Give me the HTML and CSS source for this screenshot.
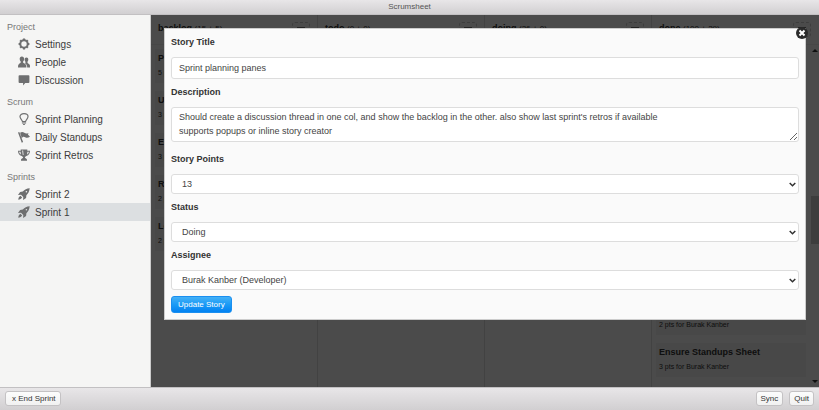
FILE: index.html
```html
<!DOCTYPE html>
<html lang="en">
<head>
    <meta charset="UTF-8">
    <meta name="viewport" content="width=device-width, initial-scale=1.0">
    <title>Scrumsheet</title>
    <link rel="stylesheet" href="styles.css">
</head>
<body>
    <svg class="sprite" aria-hidden="true">
        <symbol id="icon-cog" viewBox="0 0 20 20">
            <circle cx="10" cy="10" r="6.200" fill="none" stroke="currentColor" stroke-width="3.400"/>
            <path fill="none" stroke="currentColor" stroke-width="3.600" d="M10 1v2.500M10 16.500V19M1 10h2.500M16.500 10H19M3.600 3.600l1.800 1.800M14.600 14.600l1.800 1.800M3.600 16.400l1.800-1.800M14.600 5.400l1.800-1.800"/>
        </symbol>
        <symbol id="icon-users" viewBox="0 0 20 20">
            <path d="M6.500 1c2.500 0 3.700 1.600 3.700 4 0 1.700-.7 3.200-1.700 4.100v1.700c0 1 5 2.200 5.300 4.900l.2 3.300H0l.2-3.300c.3-2.700 4.300-3.900 4.300-4.900V9.100C3.500 8.200 2.800 6.700 2.800 5c0-2.400 1.200-4 3.700-4z"/>
            <path d="M14 2.500c2.200 0 3.200 1.400 3.200 3.500 0 1.500-.5 2.700-1.400 3.500v1.700c0 1 3.900 1.900 4.100 4.300l.1 3.500h-4.700c0-3-.5-4.900-3.600-6.500l.7-1V9.500C11.500 8.700 11 7.500 11 6c0-2.100.9-3.500 3-3.500z"/>
        </symbol>
        <symbol id="icon-comment" viewBox="0 0 20 20">
            <path d="M2.500 2h15c1 0 1.500.6 1.500 1.500v10c0 1-.5 1.500-1.500 1.500H12l-3.500 4V15h-6C1.500 15 1 14.500 1 13.500v-10C1 2.600 1.500 2 2.500 2z"/>
        </symbol>
        <symbol id="icon-bulb" viewBox="0 0 20 20">
            <path fill="none" stroke="currentColor" stroke-width="2" d="M7.500 14.500c0-3-4.200-4.500-4.200-8.500C3.300 3 6 1 10 1s6.700 2 6.700 5c0 4-4.200 5.500-4.200 8.500z"/>
            <path d="M6.500 16h7v1.700h-7zM8 18.300h4L11 20H9z"/>
        </symbol>
        <symbol id="icon-flag" viewBox="0 0 20 20">
            <path d="M0 2.500L2.200 1.500l6.300 17-2.200.9zM3.500 3c3-2.500 5-1.500 7 0s4 2 7 .2L16.500 6l3.500 3.500c-3.500 2.500-6 2-8 .8s-3.500-1.500-5.700 1.300z"/>
        </symbol>
        <symbol id="icon-trophy" viewBox="0 0 20 20">
            <path fill-rule="evenodd" d="M4.500 1h11v2H20c0 4.500-1.800 7.500-6 8.700-1 .9-2.500 1.300-2.500 2.300 0 1.700 3.500 1.500 3.500 4v1.500H5V18c0-2.500 3.500-2.300 3.500-4 0-1-1.500-1.400-2.500-2.300C1.800 10.500 0 7.500 0 3h4.500zM1.800 4.500c.3 2 1.200 3.600 3 4.700L4.300 4.500zM18.200 4.500h-2.500l-.5 4.700c1.800-1.100 2.700-2.700 3-4.700zM7 2.500l1 7.500h1.200L8.500 2.500z"/>
        </symbol>
        <symbol id="icon-rocket" viewBox="0 0 20 20">
            <path fill-rule="evenodd" d="M19.500.5c-.5 5-2.300 8.500-5.500 11.500l-.5 4.500L8.500 20l.3-5-3.800-3.800L0 11.500 3.500 6.500 8 6c3-3.500 6.500-5.200 11.500-5.500zM14 4.800a1.300 1.300 0 1 0 0 2.600 1.300 1.300 0 0 0 0-2.600zM4 13L7 16C6 18 3 19.500.5 19.500.5 17 2 14 4 13z"/>
        </symbol>
    </svg>

    <header class="toolbar toolbar-header">
        <h1 class="title">Scrumsheet</h1>
    </header>

    <div class="window-content">
        <nav class="sidebar">
            <h2 class="nav-title">Project</h2>
            <a class="nav-item" href="#settings"><svg><use href="#icon-cog"/></svg>Settings</a>
            <a class="nav-item" href="#people"><svg><use href="#icon-users"/></svg>People</a>
            <a class="nav-item" href="#discussion"><svg><use href="#icon-comment"/></svg>Discussion</a>
            <h2 class="nav-title">Scrum</h2>
            <a class="nav-item" href="#planning"><svg><use href="#icon-bulb"/></svg>Sprint Planning</a>
            <a class="nav-item" href="#standups"><svg><use href="#icon-flag"/></svg>Daily Standups</a>
            <a class="nav-item" href="#retros"><svg><use href="#icon-trophy"/></svg>Sprint Retros</a>
            <h2 class="nav-title">Sprints</h2>
            <a class="nav-item" href="#sprint-2"><svg><use href="#icon-rocket"/></svg>Sprint 2</a>
            <a class="nav-item active" href="#sprint-1"><svg><use href="#icon-rocket"/></svg>Sprint 1</a>
        </nav>

        <main class="pane">
            <div class="board">
                <section class="column">
                    <div class="column-head"><h3>backlog <small>(15 + 5)</small></h3><button type="button" class="add" aria-label="Add story"></button></div>
                    <div class="cards">
                        <article class="card"><h4>Pe</h4><p>5 <em>pt</em></p></article>
                        <article class="card"><h4>Us</h4><p>3 <em>pt</em></p></article>
                        <article class="card"><h4>Ed</h4><p>3 <em>pt</em></p></article>
                        <article class="card"><h4>Re</h4><p>2 <em>pt</em></p></article>
                        <article class="card"><h4>Lo</h4><p>2 <em>pt</em></p></article>
                    </div>
                </section>
                <section class="column">
                    <div class="column-head"><h3>todo <small>(0 + 0)</small></h3><button type="button" class="add" aria-label="Add story"></button></div>
                </section>
                <section class="column">
                    <div class="column-head"><h3>doing <small>(26 + 0)</small></h3><button type="button" class="add" aria-label="Add story"></button></div>
                </section>
                <section class="column">
                    <div class="column-head"><h3>done <small>(100 + 29)</small></h3><button type="button" class="add" aria-label="Add story"></button></div>
                    <div class="scroll-area">
                        <div class="cards">
                            <article class="card"></article>
                            <article class="card"></article>
                            <article class="card"></article>
                            <article class="card"></article>
                            <article class="card"></article>
                            <article class="card"></article>
                            <article class="card"><h4>Story</h4><p>2 pts for Burak Kanber</p></article>
                            <article class="card"><h4>Ensure Standups Sheet</h4><p>3 pts for Burak Kanber</p></article>
                        </div>
                        <div class="scrollbar"><i class="arrow up"></i><i class="thumb"></i><i class="arrow down"></i></div>
                    </div>
                </section>
            </div>

            <div class="overlay"></div>
            <form class="modal">
                <button type="button" class="close" aria-label="Close">
                    <svg viewBox="0 0 12 12"><circle cx="6" cy="6" r="6" fill="#2b2b2b"/><path d="M3.500 3.500l5 5M8.500 3.500l-5 5" stroke="#fff" stroke-width="2"/></svg>
                </button>
                <label for="title">Story Title</label>
                <input type="text" id="title" value="Sprint planning panes">
                <label for="description">Description</label>
                <textarea id="description">Should create a discussion thread in one col, and show the backlog in the other. also show last sprint's retros if available
supports popups or inline story creator</textarea>
                <label for="points">Story Points</label>
                <select id="points"><option>13</option></select>
                <label for="status">Status</label>
                <select id="status"><option>Doing</option></select>
                <label for="assignee">Assignee</label>
                <select id="assignee"><option>Burak Kanber (Developer)</option></select>
                <button type="submit" class="btn btn-primary">Update Story</button>
            </form>
        </main>
    </div>

    <footer class="toolbar toolbar-footer">
        <button type="button" class="btn btn-end">x End Sprint</button>
        <div class="btn-set">
            <button type="button" class="btn">Sync</button>
            <button type="button" class="btn">Quit</button>
        </div>
    </footer>
</body>
</html>
```
FILE: styles.css
```css
* {
    box-sizing: border-box;
}
body {
    margin: 0;
    height: 100vh;
    display: flex;
    flex-direction: column;
    overflow: hidden;
    font-family: "Liberation Sans", Arial, sans-serif;
    font-size: 9px;
    color: #333;
}
h1, h2, h3, h4, p {
    margin: 0;
}
button, input, select, textarea {
    font: inherit;
    color: inherit;
}
.sprite {
    display: none;
}

/* toolbars */
.toolbar {
    flex: none;
    display: flex;
    align-items: center;
    background: linear-gradient(#e8e6e8, #d1cfd1);
}
.toolbar-header {
    height: 15px;
    justify-content: center;
    border-bottom: 1px solid #c2c0c2;
}
.toolbar-footer {
    height: 23px;
    padding: 0 5px 2px;
    justify-content: space-between;
    border-top: 1px solid #c2c0c2;
}
.title {
    padding-bottom: 1px;
    font-size: 8px;
    font-weight: 400;
    color: #555;
}
.btn {
    height: 15px;
    padding: 0 4px;
    font-size: 8px;
    line-height: 13px;
    color: #333;
    background: linear-gradient(#fcfcfc, #f1f1f1);
    border: 1px solid #c4c2c4;
    border-radius: 3px;
}
.btn-end {
    padding: 0 4px 0 6px;
}
.btn-set {
    display: flex;
    gap: 6px;
}
.btn-primary {
    display: block;
    height: 17px;
    padding: 0 6px;
    color: #fff;
    background: linear-gradient(#44b0f6, #1b9bf6 50%, #0382f2);
    border-color: #1a8ff0;
}

/* sidebar */
.window-content {
    flex: 1;
    min-height: 0;
    display: flex;
}
.sidebar {
    flex: none;
    width: 151px;
    padding-top: 5px;
    background: #f5f5f4;
    border-right: 1px solid #ccc;
}
.nav-title {
    padding-left: 7px;
    font-size: 9px;
    font-weight: 400;
    line-height: 15px;
    color: #777;
}
.nav-item + .nav-title {
    margin-top: 6px;
}
.nav-item {
    display: flex;
    align-items: center;
    gap: 5px;
    height: 18px;
    padding-left: 18px;
    font-size: 10px;
    color: #3c3c3c;
    text-decoration: none;
}
.nav-item.active {
    background: #dcdfe1;
}
.nav-item svg {
    width: 12px;
    height: 12px;
    fill: #6e6f70;
    color: #6e6f70;
}

/* board */
.pane {
    flex: 1;
    min-width: 0;
    position: relative;
}
.board {
    height: 100%;
    display: grid;
    grid-template-columns: repeat(4, 1fr);
    overflow: hidden;
    background: #fafafa;
}
.column {
    min-width: 0;
    min-height: 0;
    display: flex;
    flex-direction: column;
    overflow: hidden;
    border-right: 1px solid #ddd;
}
.column:last-child {
    border-right: 0;
}
.column-head {
    flex: none;
    display: flex;
    align-items: center;
    justify-content: space-between;
    height: 30px;
    padding: 0 7px;
    border-bottom: 1px solid #eee;
}
.column-head h3 {
    padding-bottom: 4px;
    font-size: 9px;
}
.column-head small {
    font-size: 8px;
    font-weight: 400;
}
.add {
    width: 18px;
    height: 15px;
    padding: 0;
    background: linear-gradient(#777, #777) center / 8px 5px no-repeat;
    border: 1px dashed #ccc;
    border-radius: 3px;
}
.column:last-child .column-head {
    padding-right: 8px;
}
.scroll-area {
    flex: 1;
    min-height: 0;
    display: flex;
}
.cards {
    flex: 1;
    padding: 4px;
}
.card {
    height: 34px;
    margin-bottom: 8px;
    padding: 3px;
    background: #f0f0f0;
}
.card h4 {
    font-size: 9px;
    line-height: 12px;
}
.card p {
    margin-top: 3px;
    font-size: 7px;
    line-height: 12px;
}
.card em {
    font-style: normal;
    color: #c33;
}
.scrollbar {
    width: 9px;
    display: flex;
    flex-direction: column;
    align-items: center;
    padding: 1px 0;
}
.arrow {
    border: 3px solid transparent;
}
.arrow.up {
    border-bottom-color: #333;
}
.arrow.down {
    margin-top: auto;
    border-top-color: #333;
}
.thumb {
    width: 8px;
    height: 14%;
    margin-top: 144px;
    background: #ccc;
}

/* story editor */
.overlay {
    position: absolute;
    inset: 0;
    background: rgba(0, 0, 0, 0.7);
}
.modal {
    position: absolute;
    top: 13px;
    left: 13px;
    right: 13px;
    padding: 6px;
    background: #fafafa;
    border: 1px solid #ccc;
}
.modal label {
    display: block;
    margin-bottom: 8px;
    line-height: 14px;
    font-weight: bold;
}
.modal input, .modal textarea, .modal select {
    display: block;
    width: 100%;
    margin: 0 0 6px;
    color: #444;
    background: #fff;
    border: 1px solid #ddd;
    border-radius: 3px;
}
.modal input {
    height: 22px;
    padding: 0 7px;
}
.modal textarea {
    height: 35px;
    margin-bottom: 10px;
    padding: 2px 7px;
    line-height: 14px;
    overflow: hidden;
}
.modal select {
    height: 20px;
    padding: 0 10px;
    appearance: none;
    background: #fff url("data:image/svg+xml,%3Csvg xmlns='http://www.w3.org/2000/svg' viewBox='0 0 7 5'%3E%3Cpath d='M.7 1l2.800 2.700L6.300 1' fill='none' stroke='%23333' stroke-width='1.500'/%3E%3C/svg%3E") right 2px center / 7px 5px no-repeat;
}
.close {
    position: absolute;
    top: -2px;
    right: -3px;
    width: 12px;
    height: 12px;
    padding: 0;
    background: none;
    border: 0;
}
.close svg {
    display: block;
}
```
